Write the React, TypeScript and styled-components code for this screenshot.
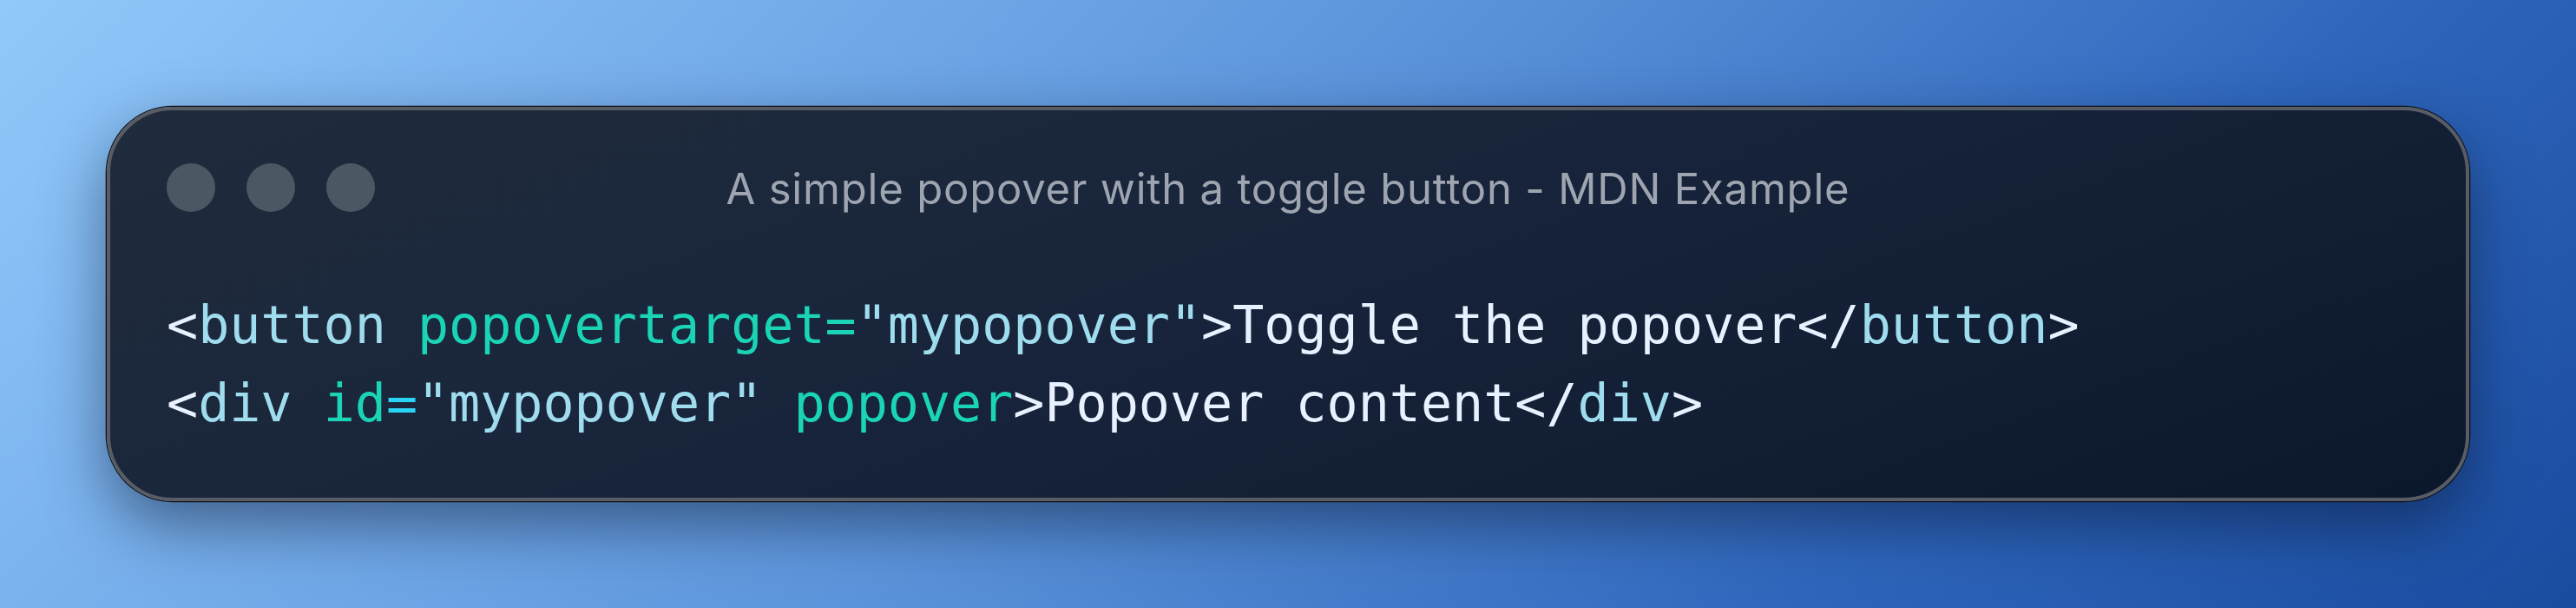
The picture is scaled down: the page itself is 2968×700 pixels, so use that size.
import React from "react";
import styled, { createGlobalStyle } from "styled-components";

const Global = createGlobalStyle`
  html, body { margin: 0; padding: 0; }
  body { width: 2968px; height: 700px; overflow: hidden; }
`;

const Page = styled.div`
  box-sizing: border-box;
  width: 2968px;
  height: 700px;
  padding: 123px;
  background: linear-gradient(135deg, #92c9fb 0%, #5d95dc 45%, #2f67bd 75%, #1a4b9f 100%);
  display: flex;
  flex-direction: column;
`;

const Card = styled.div`
  box-sizing: border-box;
  width: 100%;
  height: 454px;
  border: 4px solid #585d65;
  border-radius: 76px;
  background: linear-gradient(160deg, #202c3c 0%, #17233a 50%, #0b182b 100%);
  box-shadow: 0 0 0 1.3px #101317, 0 28px 70px rgba(8, 20, 45, 0.5);
  padding: 61px 65px 0 65px;
  display: flex;
  flex-direction: column;
`;

const Header = styled.div`
  display: grid;
  grid-template-columns: 1fr auto 1fr;
  align-items: center;
  height: 56px;
`;

const Dots = styled.div`
  display: flex;
  gap: 36px;
`;

const Dot = styled.span`
  width: 56px;
  height: 56px;
  border-radius: 50%;
  background: #4b5762;
`;

const Title = styled.div`
  font-family: Inter, "Liberation Sans", sans-serif;
  font-size: 49px;
  letter-spacing: 0.8px;
  color: #9ea5b0;
  line-height: 1;
  white-space: nowrap;
  padding-top: 2px;
`;

const Code = styled.pre`
  margin: 85px 0 0 0;
  padding: 0;
  font-family: "DejaVu Sans Mono", "Liberation Mono", monospace;
  font-size: 60px;
  line-height: 90px;
  color: #e8f1ff;
  white-space: pre;
`;

const Line = styled.div`
  height: 90px;
`;

type Kind = "tag" | "attr" | "eq" | "str";

const colors: Record<Kind, string> = {
  tag: "#9fdcee",
  attr: "#1bd4b5",
  eq: "#2bd3f5",
  str: "#9fdcee",
};

const Tok = styled.span<{ $k: Kind }>`
  color: ${(p) => colors[p.$k]};
`;

export default function App() {
  return (
    <>
      <Global />
      <Page>
        <Card>
          <Header>
            <Dots>
              <Dot />
              <Dot />
              <Dot />
            </Dots>
            <Title>A simple popover with a toggle button - MDN Example</Title>
            <span />
          </Header>
          <Code>
            <Line>
              {"<"}
              <Tok $k="tag">button</Tok> <Tok $k="attr">popovertarget=</Tok>
              <Tok $k="str">"mypopover"</Tok>
              {">Toggle the popover</"}
              <Tok $k="tag">button</Tok>
              {">"}
            </Line>
            <Line>
              {"<"}
              <Tok $k="tag">div</Tok> <Tok $k="attr">id</Tok>
              <Tok $k="eq">=</Tok>
              <Tok $k="str">"mypopover"</Tok> <Tok $k="attr">popover</Tok>
              {">Popover content</"}
              <Tok $k="tag">div</Tok>
              {">"}
            </Line>
          </Code>
        </Card>
      </Page>
    </>
  );
}
